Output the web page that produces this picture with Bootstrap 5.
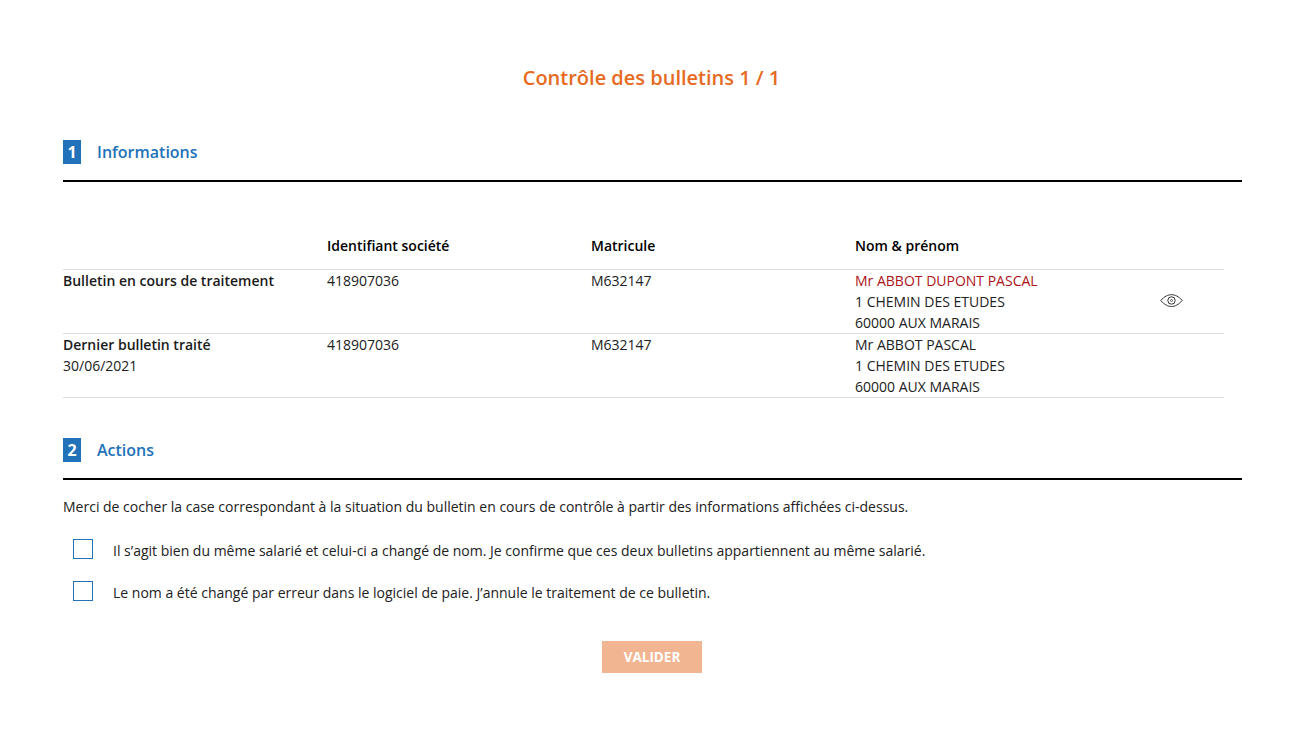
<!DOCTYPE html>
<html lang="fr">
<head>
<meta charset="utf-8">
<title>Contrôle des bulletins</title>
<link href="https://cdn.jsdelivr.net/npm/bootstrap@5.3.0/dist/css/bootstrap.min.css" rel="stylesheet">
<style>
body{font-family:"Open Sans","Liberation Sans",sans-serif;font-size:14px;line-height:21px;color:#212121;background:#fff}
.page-wrap{padding:0 61px 0 63px}
.page-title{font-size:20px;font-weight:600;line-height:28px;color:#e66a1f;text-align:center;margin:0;padding:64px 2px 48px 0}
.sec-head{display:flex;align-items:center;gap:16px;padding-bottom:16px;border-bottom:2px solid #000;box-sizing:content-box;height:24px;margin:0}
.sec-num{width:18px;height:24px;background:#2272b9;color:#fff;font-weight:700;font-size:16px;line-height:24px;text-align:center}
.sec-name{font-size:16px;font-weight:600;color:#2272b9;line-height:24px}
.info-tbl{width:1161px;table-layout:fixed;margin:41px 0 0;border-collapse:collapse}
.info-tbl th,.info-tbl td{padding:0;vertical-align:top;border-bottom:1px solid #dedede;font-weight:400;height:64px}
.info-tbl thead th{font-weight:600;color:#000;height:46px;padding-top:12px;vertical-align:top}
.col-a{width:264px}
.col-e{width:105px}
.info-tbl td.eye-cell{vertical-align:middle}
.eye-ico{display:block;margin:0 auto}
.info-tbl td.lbl,.info-tbl .lbl{font-weight:600;color:#1a1a1a}
.alert-name{color:#ad1217}
.act-intro{margin:16px 0 0}
.act-row{display:flex;align-items:flex-start;gap:20px;padding-left:10px;margin-top:20px}
.act-intro+.act-row{margin-top:22px}
.act-txt{padding-top:1px}
.act-box{appearance:none;width:20px;height:20px;border:1px solid #2272b9;background:#fff;margin:0;flex:none;border-radius:0}
.send-btn,.send-btn:disabled{display:block;width:100px;height:32px;margin:38px 0 0 539px;padding:0;border:0;border-radius:0;background:#f2b592;color:#fff;font-weight:700;font-size:13.5px;line-height:32px;opacity:1}
.sec-two{margin-top:40px}
</style>
</head>
<body>
<div class="page-wrap">
  <h1 class="page-title">Contrôle des bulletins 1 / 1</h1>

  <div class="sec-head"><span class="sec-num">1</span><span class="sec-name">Informations</span></div>

  <table class="info-tbl">
    <thead>
      <tr>
        <th class="col-a"></th>
        <th class="col-a">Identifiant société</th>
        <th class="col-a">Matricule</th>
        <th class="col-a">Nom &amp; prénom</th>
        <th class="col-e"></th>
      </tr>
    </thead>
    <tbody>
      <tr>
        <td class="lbl">Bulletin en cours de traitement</td>
        <td>418907036</td>
        <td>M632147</td>
        <td><span class="alert-name">Mr ABBOT DUPONT PASCAL</span><br>1 CHEMIN DES ETUDES<br>60000 AUX MARAIS</td>
        <td class="eye-cell">
          <svg class="eye-ico" width="23" height="14" viewBox="0 0 23 14" fill="none" stroke="#333" stroke-width="1" aria-hidden="true"><path d="M.7 6.500C4.500 2.300 8 .7 11.500 .7s7 1.600 10.800 5.800c-3.800 4.200-7.300 6-10.800 6S4.500 10.700 .7 6.500z"/><circle cx="11.500" cy="6.500" r="3.700"/><circle cx="11.500" cy="6.500" r="1" stroke-width=".7"/></svg>
        </td>
      </tr>
      <tr>
        <td><span class="lbl">Dernier bulletin traité</span><br>30/06/2021</td>
        <td>418907036</td>
        <td>M632147</td>
        <td>Mr ABBOT PASCAL<br>1 CHEMIN DES ETUDES<br>60000 AUX MARAIS</td>
        <td></td>
      </tr>
    </tbody>
  </table>

  <div class="sec-head sec-two"><span class="sec-num">2</span><span class="sec-name">Actions</span></div>

  <p class="act-intro">Merci de cocher la case correspondant à la situation du bulletin en cours de contrôle à partir des informations affichées ci-dessus.</p>

  <label class="act-row"><input class="act-box" type="checkbox"><span class="act-txt">Il s’agit bien du même salarié et celui-ci a changé de nom. Je confirme que ces deux bulletins appartiennent au même salarié.</span></label>
  <label class="act-row"><input class="act-box" type="checkbox"><span class="act-txt">Le nom a été changé par erreur dans le logiciel de paie. J’annule le traitement de ce bulletin.</span></label>

  <button type="button" class="btn send-btn" disabled>VALIDER</button>
</div>
<script src="https://cdn.jsdelivr.net/npm/bootstrap@5.3.0/dist/js/bootstrap.bundle.min.js"></script>
</body>
</html>
